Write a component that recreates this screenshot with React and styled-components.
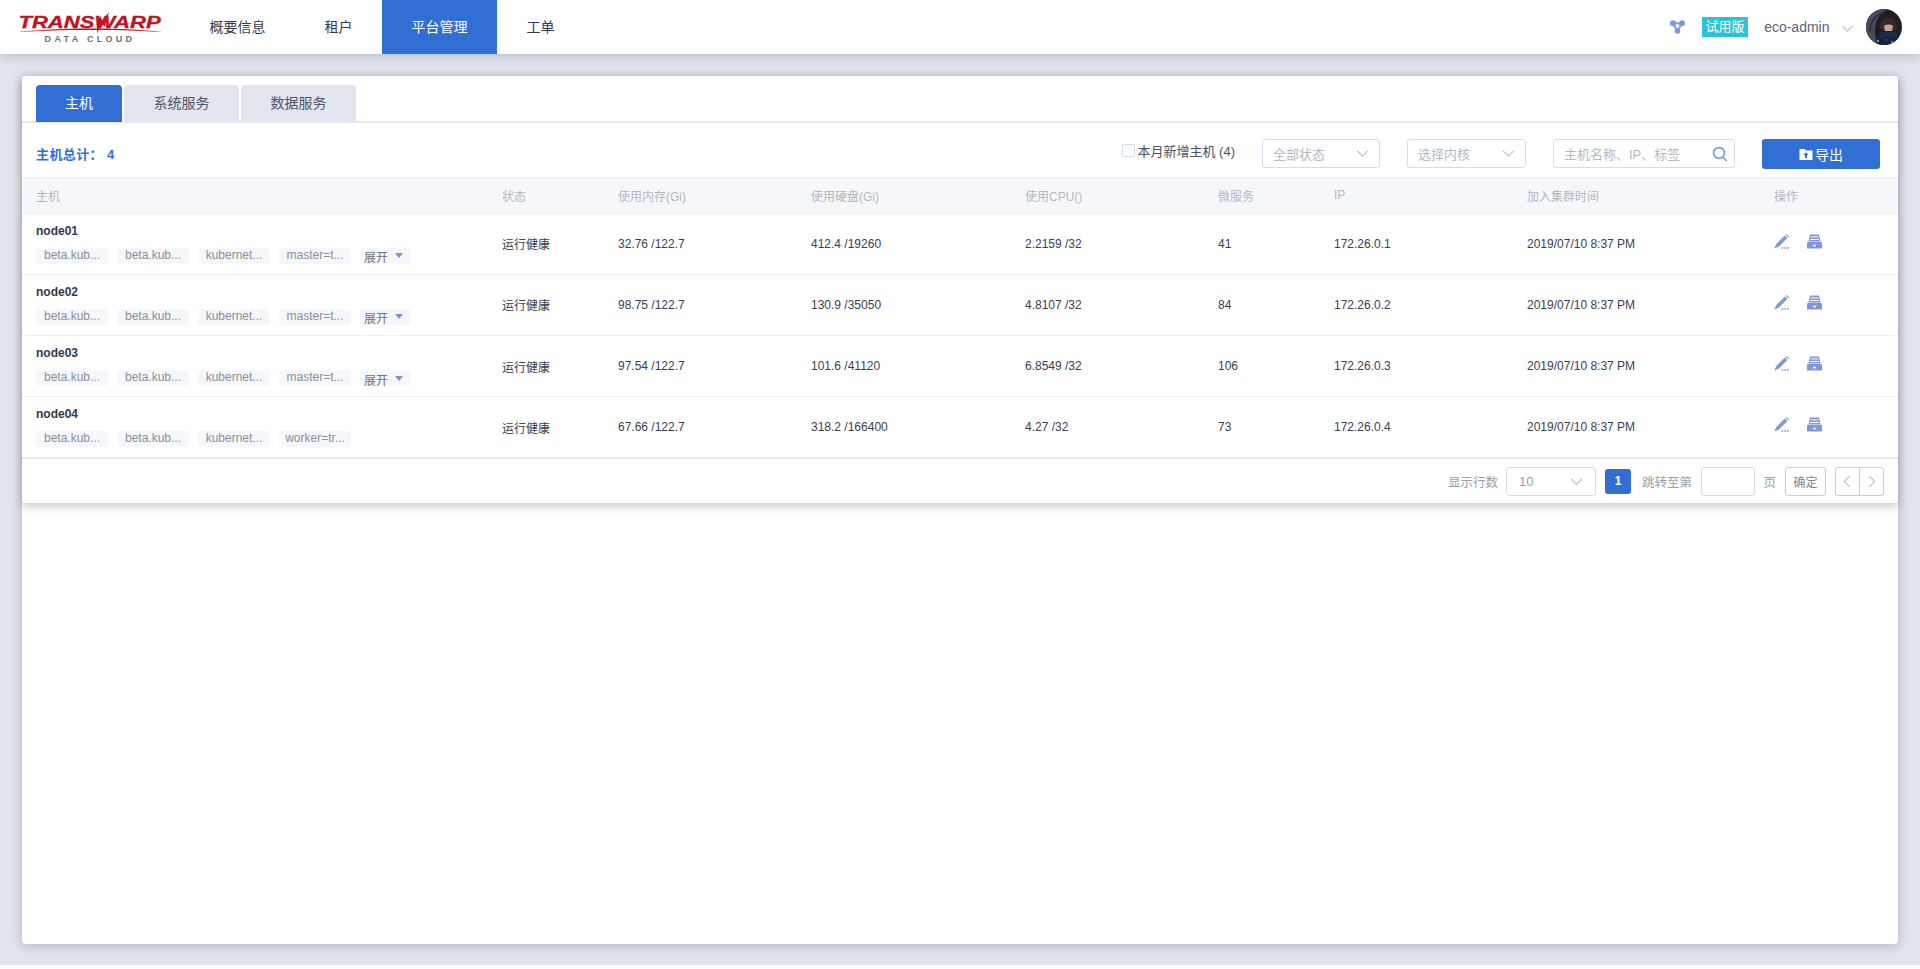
import React from 'react';
import styled, { createGlobalStyle } from 'styled-components';

const FONT = `"Liberation Sans", "Noto Sans CJK SC", sans-serif`;

const NAV_ITEMS = [
  { id: 'overview', label: '概要信息' },
  { id: 'tenant', label: '租户' },
  { id: 'platform', label: '平台管理', active: true },
  { id: 'ticket', label: '工单' }
];

const TABS = [
  { id: 'host', label: '主机', width: 86, active: true },
  { id: 'system', label: '系统服务', width: 115 },
  { id: 'data', label: '数据服务', width: 115 }
];

const COLUMNS = ['主机', '状态', '使用内存(Gi)', '使用硬盘(Gi)', '使用CPU()', '微服务', 'IP', '加入集群时间', '操作'];

const COMMON_TAGS = ['beta.kub...', 'beta.kub...', 'kubernet...'];

const NODES = [
  { name: 'node01', mem: '32.76 /122.7', disk: '412.4 /19260', cpu: '2.2159 /32', svc: '41', ip: '172.26.0.1', role: 'master=t...', more: true },
  { name: 'node02', mem: '98.75 /122.7', disk: '130.9 /35050', cpu: '4.8107 /32', svc: '84', ip: '172.26.0.2', role: 'master=t...', more: true },
  { name: 'node03', mem: '97.54 /122.7', disk: '101.6 /41120', cpu: '6.8549 /32', svc: '106', ip: '172.26.0.3', role: 'master=t...', more: true },
  { name: 'node04', mem: '67.66 /122.7', disk: '318.2 /166400', cpu: '4.27 /32', svc: '73', ip: '172.26.0.4', role: 'worker=tr...', more: false }
];

const GRID = '466px 116px 193px 214px 193px 116px 193px 247px 1fr';

const GlobalStyle = createGlobalStyle`
  html, body {
    margin: 0;
    height: 100%;
    background: #fff;
    font-family: ${FONT};
  }
  #root { height: 100%; }
  * { box-sizing: border-box; }
`;

const Page = styled.div`
  height: 965px;
  display: flex;
  flex-direction: column;
  overflow: hidden;
  background: #e0e4ec;
`;

const TopBar = styled.header`
  height: 54px;
  flex: none;
  display: flex;
  align-items: stretch;
  padding: 0 18px 0 17px;
  background: #fff;
  box-shadow: 0 2px 10px rgba(70, 80, 110, 0.28);
  position: relative;
  z-index: 2;
`;

const Logo = styled.div`
  width: 146px;
  margin-right: 17px;
  display: flex;
  flex-direction: column;
  align-items: center;
  position: relative;
`;

const LogoWord = styled.span`
  margin-top: 16.5px;
  font-size: 16px;
  line-height: 12px;
  font-weight: 700;
  font-style: italic;
  color: #c2121f;
  -webkit-text-stroke: 0.3px #c2121f;
  white-space: nowrap;
  transform: scaleX(1.38);
`;

const LogoSub = styled.span`
  margin-top: 5.5px;
  font-size: 9px;
  line-height: 10px;
  font-weight: 700;
  color: #6f7175;
  letter-spacing: 3.3px;
  white-space: nowrap;
`;

const LogoSwoosh = styled.svg`
  position: absolute;
  left: 0;
  top: 10px;
  width: 146px;
  height: 26px;
`;

const Nav = styled.nav`
  display: flex;
`;

const NavItem = styled.a`
  padding: 0 29.5px;
  line-height: 54px;
  font-size: 14px;
  color: ${p => (p.$active ? '#fff' : '#333a4a')};
  background: ${p => (p.$active ? '#316fd4' : 'transparent')};
`;

const TopRight = styled.div`
  margin-left: auto;
  display: flex;
  align-items: center;
`;

const TrialBadge = styled.span`
  width: 46px;
  height: 20px;
  margin-left: 17px;
  background: #2dc3d6;
  color: #fff;
  font-size: 13px;
  line-height: 20px;
  text-align: center;
`;

const UserName = styled.span`
  margin-left: 16px;
  font-size: 14px;
  color: #5b6579;
`;

const UserCaret = styled.span`
  height: 13px;
  margin-left: 11.5px;
`;

const Avatar = styled.svg`
  width: 36px;
  height: 36px;
  margin-left: 12px;
  border-radius: 50%;
`;

const Main = styled.main`
  flex: 1;
  margin: 22px 22px 21px;
  background: #fff;
  border-radius: 4px;
  box-shadow: 0 2px 12px rgba(60, 60, 75, 0.28);
`;

const HostPanel = styled.section`
  height: 427px;
  border-radius: 4px;
  background: #fff;
  box-shadow: 0 3px 10px rgba(60, 60, 75, 0.3);
`;

const TabBar = styled.div`
  height: 47px;
  padding: 9px 14px 0;
  display: flex;
  gap: 2px;
  border-bottom: 2px solid #e4e7ee;
`;

const Tab = styled.div`
  width: ${p => p.$width}px;
  height: 37px;
  text-align: center;
  line-height: 37px;
  font-size: 14px;
  border-radius: 4px 4px 0 0;
  color: ${p => (p.$active ? '#fff' : '#4e5668')};
  background: ${p => (p.$active ? '#316fd4' : '#e2e5ed')};
`;

const Toolbar = styled.div`
  height: 54px;
  padding: 7px 18px 0 14px;
  display: flex;
  align-items: center;
`;

const Total = styled.strong`
  font-size: 13px;
  color: #316fd4;
  letter-spacing: 0.4px;
`;

const MonthFilter = styled.label`
  margin-left: auto;
  display: flex;
  align-items: center;
  margin-bottom: 6px;
  font-size: 13px;
  color: #4b5262;
  white-space: nowrap;
`;

const Check = styled.span`
  width: 13px;
  height: 13px;
  margin-right: 2px;
  border: 1px solid #d5dcec;
  border-radius: 2px;
`;

const Select = styled.div`
  width: ${p => p.$width}px;
  height: 29px;
  margin-left: ${p => p.$gap}px;
  padding: 0 10px;
  display: flex;
  align-items: center;
  justify-content: space-between;
  border: 1px solid #d5dcec;
  border-radius: 3px;
  font-size: 13px;
  color: #b4b8c4;
`;

const Search = styled(Select)`
  padding-right: 6px;
`;

const ExportButton = styled.button`
  width: 118px;
  height: 30px;
  margin-left: 27px;
  display: flex;
  align-items: center;
  justify-content: center;
  gap: 2px;
  border: 0;
  border-radius: 3px;
  background: #316fd4;
  color: #fff;
  font-family: ${FONT};
  font-size: 14px;
`;

const HeadRow = styled.div`
  height: 36.5px;
  padding-left: 14px;
  display: grid;
  grid-template-columns: ${GRID};
  align-items: center;
  background: #f5f7fb;
  border-top: 1px solid #eef0f6;
  border-bottom: 1px solid #eef0f6;
  font-size: 12px;
  color: #b3b7c2;
`;

const Row = styled.div`
  height: ${p => (p.$last ? 62 : 61.3)}px;
  padding-left: 14px;
  display: grid;
  grid-template-columns: ${GRID};
  align-items: center;
  border-bottom: ${p => (p.$last ? '2px solid #e4e7ee' : '1px solid #eef0f6')};
  font-size: 12px;
  color: #3a4050;
`;

const NodeCell = styled.div`
  display: flex;
  flex-direction: column;
  gap: 10px;
`;

const NodeName = styled.div`
  font-weight: 700;
  font-size: 12px;
  line-height: 14px;
  color: #333a4a;
`;

const TagList = styled.div`
  display: flex;
  gap: 9px;
`;

const Tag = styled.span`
  width: 72px;
  height: 16px;
  background: #f5f7fb;
  border-radius: 4px;
  font-size: 12px;
  line-height: 15px;
  text-align: center;
  color: #8a8f9c;
  white-space: nowrap;
`;

const Expand = styled.span`
  width: 51px;
  height: 16px;
  padding: 2px 0 0 4px;
  display: flex;
  align-items: center;
  background: #f5f7fb;
  border-radius: 4px;
  font-size: 12px;
  color: #6f7480;
`;

const Caret = styled.i`
  width: 0;
  height: 0;
  margin: -2px 0 0 7px;
  border-left: 4.5px solid transparent;
  border-right: 4.5px solid transparent;
  border-top: 5px solid #7b93d3;
`;

const Actions = styled.div`
  display: flex;
  gap: 18px;
  margin-bottom: 5px;
`;

const Pager = styled.div`
  height: 43.6px;
  padding-right: 14px;
  display: flex;
  align-items: center;
  justify-content: flex-end;
  font-size: 12.5px;
  color: #9a9ea9;
`;

const PagerSelect = styled.div`
  width: 90px;
  height: 29px;
  margin-left: 8px;
  padding: 0 12px;
  display: flex;
  align-items: center;
  justify-content: space-between;
  border: 1px solid #d5dcec;
  border-radius: 3px;
  font-size: 13px;
  color: #9a9ea9;
`;

const PageNumber = styled.span`
  width: 26px;
  height: 25px;
  margin: 0 11px 0 9px;
  background: #316fd4;
  border-radius: 3px;
  color: #fff;
  font-size: 12px;
  font-weight: 700;
  line-height: 25px;
  text-align: center;
`;

const PageInput = styled.div`
  width: 54px;
  height: 29px;
  margin: 0 8.5px 0 9px;
  border: 1px solid #d5dcec;
  border-radius: 3px;
`;

const ConfirmButton = styled.button`
  width: 41px;
  height: 29px;
  margin-left: 9px;
  padding: 0;
  border: 1px solid #c8ccd6;
  border-radius: 3px;
  background: #fff;
  color: #80858f;
  font-family: ${FONT};
  font-size: 12px;
`;

const StepGroup = styled.div`
  width: 49px;
  height: 29px;
  margin-left: 9px;
  display: flex;
  border: 1px solid #c8ccd6;
  border-radius: 3px;
`;

const StepButton = styled.span`
  flex: 1;
  display: flex;
  align-items: center;
  justify-content: center;
  & + & { border-left: 1px solid #c8ccd6; }
`;

const Chevron = ({ size = 13, color = '#b9c0cf', dir = 'down' }) => (
  <svg width={size} height={size} viewBox="0 0 12 12" fill="none" stroke={color} strokeWidth="1">
    {dir === 'down' && <path d="M1 3.5 6 8.5 11 3.5" />}
    {dir === 'left' && <path d="M8 1 3 6 8 11" />}
    {dir === 'right' && <path d="M4 1 9 6 4 11" />}
  </svg>
);

const ClusterIcon = () => (
  <svg width="15" height="14" viewBox="0 0 15 14">
    <path d="M3 3.4 7.5 11 12 3.4Z" fill="none" stroke="#8ea5dc" strokeWidth="2.2" />
    <circle cx="3" cy="3.2" r="3" fill="#7f98d6" />
    <circle cx="12" cy="3.2" r="3" fill="#7f98d6" />
    <circle cx="7.5" cy="11" r="2.8" fill="#7f98d6" />
  </svg>
);

const SearchIcon = () => (
  <svg width="16" height="16" viewBox="0 0 16 16" fill="none" stroke="#7b96d4" strokeWidth="1.6">
    <circle cx="7" cy="7" r="5.4" />
    <path d="M11 11 14.5 15" />
  </svg>
);

const ExportIcon = () => (
  <svg width="14" height="14" viewBox="0 0 14 14">
    <path d="M0.5 2h5l1.4 1.6h6.6V13H0.5Z" fill="#fff" />
    <path d="M7 5.2 9.6 8H8v3H6V8H4.4Z" fill="#316fd4" />
  </svg>
);

const EditIcon = () => (
  <svg width="15" height="15" viewBox="0 0 15 15" fill="#7f98d6">
    <path d="M10.8 1.6 13.4 4.1 5 12.6 0.3 14.6 2.3 10Z" />
    <path d="M11.6.8 12.4 0 15 2.4 14.2 3.3Z" />
    <rect x="7.6" y="13.2" width="1.6" height="1.6" />
    <rect x="10.4" y="13.2" width="1.6" height="1.6" />
    <rect x="13.2" y="13.2" width="1.6" height="1.6" />
  </svg>
);

const DrawerIcon = () => (
  <svg width="15" height="15" viewBox="0 0 15 15" fill="#7f98d6">
    <path d="M3 .5H12L13.4 7H1.6Z" />
    <rect x="3.6" y="2.4" width="7.8" height="1" fill="#fff" />
    <rect x="3" y="5" width="9" height="1" fill="#fff" />
    <path d="M1 7.5H14L15 9V14.5H0V9Z" />
    <rect x="6" y="10.8" width="3" height="1.5" fill="#fff" />
  </svg>
);

const AvatarArt = () => (
  <Avatar viewBox="0 0 36 36">
    <rect width="36" height="36" fill="#1f1e25" />
    <path d="M0 36V10C4 3 12 0 22 0c-8 4-14 12-13 26l2 10Z" fill="#4a4957" />
    <path d="M4 22C4 12 10 6 17 4" fill="none" stroke="#2c2b36" strokeWidth="1.4" />
    <path d="M14 19c0-7 4-10 9-10s8 4 8 10l-3 3H17Z" fill="#3a2a26" />
    <path d="M18 17c2-2 7-2 9 0l-1 5h-7Z" fill="#c4a496" />
    <path d="M14 23h17v5H14Z" fill="#1f2b4a" />
    <path d="M11 28h22v8H11Z" fill="#17223c" />
    <circle cx="12" cy="32" r="1" fill="#aab2bd" />
    <circle cx="26" cy="33" r="1" fill="#8f9ab0" />
    <circle cx="20" cy="31" r="0.8" fill="#6f7c96" />
  </Avatar>
);

const App = () => (
  <>
    <GlobalStyle />
    <Page>
      <TopBar>
        <Logo>
          <LogoWord>TRANSWARP</LogoWord>
          <LogoSub>DATA CLOUD</LogoSub>
          <LogoSwoosh viewBox="0 0 146 26">
            <path d="M0 22C30 19.5 55 18.4 73 18.6 95 18.4 120 19.5 146 22 120 20.4 95 19.8 73 20 55 19.8 30 20.4 0 22Z" fill="#c2121f" />
            <path d="M92 2 87.5 17 84.6 12.5 80 24 80.8 11 83.6 6 85.2 11Z" fill="#c2121f" />
          </LogoSwoosh>
        </Logo>
        <Nav>
          {NAV_ITEMS.map(item => (
            <NavItem key={item.id} $active={item.active}>{item.label}</NavItem>
          ))}
        </Nav>
        <TopRight>
          <ClusterIcon />
          <TrialBadge>试用版</TrialBadge>
          <UserName>eco-admin</UserName>
          <UserCaret><Chevron /></UserCaret>
          <AvatarArt />
        </TopRight>
      </TopBar>

      <Main>
        <HostPanel>
          <TabBar>
            {TABS.map(tab => (
              <Tab key={tab.id} $width={tab.width} $active={tab.active}>{tab.label}</Tab>
            ))}
          </TabBar>

          <Toolbar>
            <Total>主机总计： 4</Total>
            <MonthFilter>
              <Check />
              本月新增主机 (4)
            </MonthFilter>
            <Select $width={118} $gap={27}>全部状态<Chevron /></Select>
            <Select $width={119} $gap={27}>选择内核<Chevron /></Select>
            <Search $width={182} $gap={27}>主机名称、IP、标签<SearchIcon /></Search>
            <ExportButton><ExportIcon />导出</ExportButton>
          </Toolbar>

          <HeadRow>
            {COLUMNS.map(col => <span key={col}>{col}</span>)}
          </HeadRow>

          {NODES.map((node, i) => (
            <Row key={node.name} $last={i === NODES.length - 1}>
              <NodeCell>
                <NodeName>{node.name}</NodeName>
                <TagList>
                  {COMMON_TAGS.map((tag, t) => <Tag key={t}>{tag}</Tag>)}
                  <Tag>{node.role}</Tag>
                  {node.more && <Expand>展开<Caret /></Expand>}
                </TagList>
              </NodeCell>
              <span>运行健康</span>
              <span>{node.mem}</span>
              <span>{node.disk}</span>
              <span>{node.cpu}</span>
              <span>{node.svc}</span>
              <span>{node.ip}</span>
              <span>2019/07/10 8:37 PM</span>
              <Actions>
                <EditIcon />
                <DrawerIcon />
              </Actions>
            </Row>
          ))}

          <Pager>
            显示行数
            <PagerSelect>10<Chevron /></PagerSelect>
            <PageNumber>1</PageNumber>
            跳转至第
            <PageInput />
            页
            <ConfirmButton>确定</ConfirmButton>
            <StepGroup>
              <StepButton><Chevron dir="left" /></StepButton>
              <StepButton><Chevron dir="right" /></StepButton>
            </StepGroup>
          </Pager>
        </HostPanel>
      </Main>
    </Page>
  </>
);

export default App;
